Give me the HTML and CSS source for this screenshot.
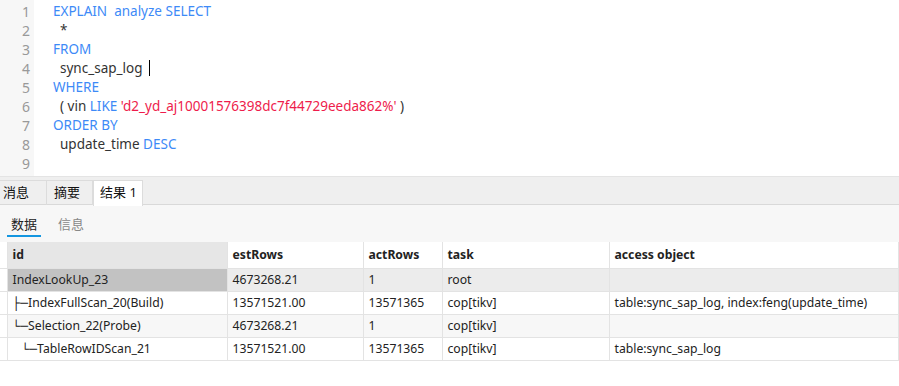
FILE: index.html
```html
<!DOCTYPE html>
<html lang="zh-CN">
<head>
    <meta charset="UTF-8">
    <title>Query Result</title>
    <link rel="stylesheet" href="styles.css">
</head>
<body>
    <!-- SQL editor -->
    <div class="editor">
        <div class="gutter">
            <div>1</div><div>2</div><div>3</div><div>4</div><div>5</div>
            <div>6</div><div>7</div><div>8</div><div>9</div>
        </div>
        <div class="code">
            <div><span class="kw">EXPLAIN&nbsp;&nbsp;analyze SELECT</span></div>
            <div class="ind">*</div>
            <div><span class="kw">FROM</span></div>
            <div class="ind">sync_sap_log <span class="caret"></span></div>
            <div><span class="kw">WHERE</span></div>
            <div class="ind">( vin <span class="kw">LIKE</span> <span class="str">'d2_yd_aj10001576398dc7f44729eeda862%'</span> )</div>
            <div><span class="kw">ORDER BY</span></div>
            <div class="ind">update_time <span class="kw">DESC</span></div>
            <div>&nbsp;</div>
        </div>
    </div>

    <!-- result tabs -->
    <div class="tabs">
        <div class="tab first">消息</div>
        <div class="tab">摘要</div>
        <div class="tab active">结果 1</div>
    </div>

    <div class="subtabs">
        <div class="subtab active">数据</div>
        <div class="subtab">信息</div>
    </div>

    <table class="grid">
        <thead>
            <tr>
                <th class="mark"></th>
                <th class="c-id sel">id</th>
                <th class="c-est">estRows</th>
                <th class="c-act">actRows</th>
                <th class="c-task">task</th>
                <th>access object</th>
            </tr>
        </thead>
        <tbody>
            <tr class="current">
                <td class="mark"></td>
                <td class="sel">IndexLookUp_23</td>
                <td>4673268.21</td>
                <td>1</td>
                <td>root</td>
                <td></td>
            </tr>
            <tr>
                <td class="mark"></td>
                <td><span class="tree">├─</span>IndexFullScan_20(Build)</td>
                <td>13571521.00</td>
                <td>13571365</td>
                <td>cop[tikv]</td>
                <td>table:sync_sap_log, index:feng(update_time)</td>
            </tr>
            <tr class="alt">
                <td class="mark"></td>
                <td><span class="tree">└─</span>Selection_22(Probe)</td>
                <td>4673268.21</td>
                <td>1</td>
                <td>cop[tikv]</td>
                <td></td>
            </tr>
            <tr>
                <td class="mark"></td>
                <td><span class="tree deep">└─</span>TableRowIDScan_21</td>
                <td>13571521.00</td>
                <td>13571365</td>
                <td>cop[tikv]</td>
                <td>table:sync_sap_log</td>
            </tr>
        </tbody>
    </table>
</body>
</html>
```

FILE: styles.css
```css
* {
    margin: 0;
    padding: 0;
    box-sizing: border-box;
}

body {
    background: #fff;
    color: #222;
    font-family: 'Noto Sans', 'Noto Sans CJK SC', sans-serif;
    font-size: 12.2px;
    width: 899px;
    height: 386px;
    overflow: hidden;
}

/* Editor */
.editor {
    display: flex;
    height: 177px;
    border-bottom: 1px solid #e4e4e4;
}

.gutter {
    width: 34px;
    background: #f7f7f7;
    color: #999;
    text-align: right;
    padding: 2px 4px 0 0;
    font-size: 14px;
}

.gutter div, .code div {
    height: 19px;
    line-height: 19px;
}

.code {
    padding: 2px 0 0 19px;
    font-size: 13.5px;
    color: #333;
    white-space: nowrap;
}

.code .ind { padding-left: 7px; }
.kw { color: #3d8af7; }
.str { color: #ee1c4b; }

.caret {
    display: inline-block;
    width: 1px;
    height: 16px;
    background: #000;
    vertical-align: -3px;
    margin-left: 3px;
}

/* Tabs */
.tabs {
    display: flex;
    height: 28px;
    padding-top: 3px;
    background: #efefef;
    border-bottom: 1px solid #d9d9d9;
}

.tab {
    height: 25px;
    line-height: 22px;
    padding: 0 12px 0 7px;
    border-top: 1px solid #dcdcdc;
    border-right: 1px solid #dcdcdc;
    font-size: 13px;
    color: #111;
}

.tab.first { padding: 0 17px 0 3px; }

.tab.active {
    background: #fff;
    height: 26px;
    margin-bottom: -1px;
    border-left: 1px solid #dcdcdc;
    padding: 0 5px 0 6px;
}

.subtabs {
    display: flex;
    gap: 13px;
    height: 37px;
    padding-left: 7px;
    background: #f7f7f7;
}

.subtab {
    padding: 0 4px;
    line-height: 38px;
    height: 32px;
    font-size: 13px;
    color: #888;
}

.subtab.active {
    color: #222;
    border-bottom: 2px solid #1496e0;
}

/* Result grid */
.grid {
    border-collapse: collapse;
    table-layout: fixed;
    width: 899px;
}

.grid th, .grid td {
    border-right: 1px solid #e3e3e3;
    border-bottom: 1px solid #e3e3e3;
    text-align: left;
    white-space: nowrap;
    overflow: hidden;
    padding: 0 5px;
    font-weight: normal;
}

.grid th {
    height: 26px;
    font-weight: bold;
    background: #fff;
}

.grid td { height: 23px; }

.tree {
    font-family: 'Liberation Mono', monospace;
    font-size: 13px;
}

.tree.deep { padding-left: 9px; }

.grid .mark { width: 7px; padding: 0; background: #fff; }
.grid .c-id { width: 220px; }
.grid .c-est { width: 136px; }
.grid .c-act { width: 79px; }
.grid .c-task { width: 167px; }

.grid th.sel { background: #e6e6e6; }
.grid tr.current td { background: #ececec; }
.grid tr.current td.sel { background: #c2c2c2; }
.grid tr.current td.mark { background: #fff; }
.grid tr.alt td { background: #f7f7f7; }
.grid tr.alt td.mark { background: #fff; }
```
